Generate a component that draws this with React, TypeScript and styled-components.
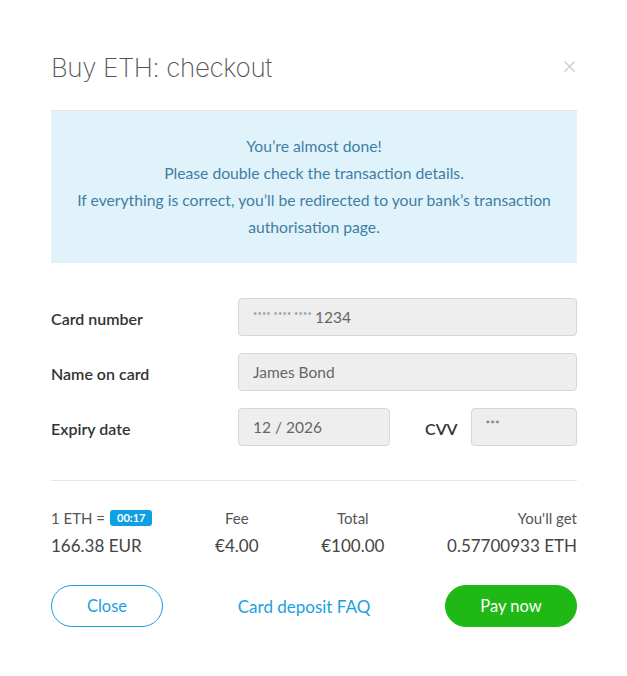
import React from "react";
import styled, { createGlobalStyle } from "styled-components";

const GlobalStyle = createGlobalStyle`
  html, body {
    margin: 0;
    padding: 0;
    background: #ffffff;
  }
  body {
    font-family: "Lato", "Open Sans", "Liberation Sans", sans-serif;
    color: #444;
    -webkit-font-smoothing: antialiased;
  }
  * { box-sizing: border-box; }
`;

const Modal = styled.div`
  width: 627px;
  min-height: 676px;
  padding: 0 50px 0 51px;
  background: #fff;
`;

const Header = styled.div`
  display: flex;
  justify-content: space-between;
  align-items: flex-start;
  padding: 50px 0 24px;
  border-bottom: 1px solid #e6e6e6;
`;

const Title = styled.h1`
  margin: 0;
  font-family: "Inter", "Lato", sans-serif;
  font-size: 26px;
  line-height: 36px;
  font-weight: 200;
  letter-spacing: -0.4px;
  color: #555;
`;

const CloseX = styled.button`
  border: 0;
  background: none;
  padding: 0;
  margin: 11px 2px 0 0;
  width: 11px;
  height: 11px;
  display: flex;
  cursor: pointer;
`;

const Notice = styled.div`
  background: #e1f3fa;
  padding: 22px 16px 22px;
  text-align: center;
  color: #3f7ea3;
  font-size: 15.7px;
  line-height: 27px;
`;

const NoticeLine = styled.p`
  margin: 0;
`;

const Form = styled.div`
  display: flex;
  flex-direction: column;
  gap: 17px;
  padding: 35px 0 34px;
  border-bottom: 1px solid #e6e6e6;
`;

const Row = styled.div`
  display: grid;
  grid-template-columns: 187px 1fr;
  align-items: center;
`;

const Label = styled.label<{ $inline?: boolean }>`
  font-size: 16px;
  font-weight: 600;
  color: #333;
  padding-top: 2px;
  margin: ${(p) => (p.$inline ? "0 13px 0 35px" : "0")};
`;

const Input = styled.div<{ $w?: number; $small?: boolean }>`
  height: 38px;
  ${(p) => (p.$w ? `width: ${p.$w}px; flex: none;` : "flex: 1;")}
  background: #eeeeee;
  border: 1px solid #d6d6d6;
  border-radius: 4px;
  padding: 0 14px;
  display: flex;
  align-items: ${(p) => (p.$small ? "flex-start" : "center")};
  padding-top: ${(p) => (p.$small ? "9px" : "0")};
  font-size: ${(p) => (p.$small ? "11px" : "15.5px")};
  color: #666;
`;

const Stars = styled.span`
  font-size: 10px;
  letter-spacing: 0.2px;
  margin-right: 3px;
  color: #777;
  position: relative;
  top: -2px;
`;

const InputGroup = styled.div`
  display: flex;
  align-items: center;
`;

const Summary = styled.div`
  display: flex;
  justify-content: space-between;
  padding-top: 27px;
`;

const Col = styled.div<{ $align: "left" | "center" | "right" }>`
  display: flex;
  flex-direction: column;
  align-items: ${(p) =>
    p.$align === "left" ? "flex-start" : p.$align === "right" ? "flex-end" : "center"};
  gap: 8px;
`;

const SumLabel = styled.div`
  display: flex;
  align-items: center;
  gap: 5px;
  font-size: 15px;
  line-height: 20px;
  color: #555;
`;

const SumValue = styled.div`
  font-size: 17px;
  line-height: 20px;
  color: #444;
`;

const Badge = styled.span`
  background: #0ea0e1;
  color: #fff;
  font-size: 11px;
  font-weight: 700;
  border-radius: 3px;
  padding: 1px 7px;
  line-height: 14px;
`;

const Actions = styled.div`
  display: flex;
  justify-content: space-between;
  align-items: center;
  padding-top: 29px;
`;

const Button = styled.button<{ $primary?: boolean }>`
  height: 42px;
  border-radius: 21px;
  font-family: inherit;
  font-size: 16.5px;
  cursor: pointer;
  ${(p) =>
    p.$primary
      ? `width: 132px; background: #1fb815; border: 1px solid #1fb815; color: #fff;`
      : `width: 112px; background: #fff; border: 1px solid #1a9fe0; color: #1a9fe0;`}
`;

const Link = styled.a`
  color: #1a9fe0;
  font-size: 17px;
  text-decoration: none;
  cursor: pointer;
`;

export default function App() {
  return (
    <>
      <GlobalStyle />
      <Modal>
        <Header>
          <Title>Buy ETH: checkout</Title>
          <CloseX aria-label="Close">
            <svg width="11" height="11" viewBox="0 0 11 11">
              <path d="M0.5 0.5L10.5 10.5M10.5 0.5L0.5 10.5" stroke="#c8c8c8" strokeWidth="1.1" />
            </svg>
          </CloseX>
        </Header>
        <Notice>
          <NoticeLine>You’re almost done!</NoticeLine>
          <NoticeLine>Please double check the transaction details.</NoticeLine>
          <NoticeLine>
            If everything is correct, you’ll be redirected to your bank’s transaction
            <br />
            authorisation page.
          </NoticeLine>
        </Notice>
        <Form>
          <Row>
            <Label>Card number</Label>
            <Input>
              <Stars>**** **** ****</Stars>1234
            </Input>
          </Row>
          <Row>
            <Label>Name on card</Label>
            <Input>James Bond</Input>
          </Row>
          <Row>
            <Label>Expiry date</Label>
            <InputGroup>
              <Input $w={152}>12 / 2026</Input>
              <Label $inline>CVV</Label>
              <Input $small>***</Input>
            </InputGroup>
          </Row>
        </Form>
        <Summary>
          <Col $align="left">
            <SumLabel>
              1 ETH = <Badge>00:17</Badge>
            </SumLabel>
            <SumValue>166.38 EUR</SumValue>
          </Col>
          <Col $align="center">
            <SumLabel>Fee</SumLabel>
            <SumValue>€4.00</SumValue>
          </Col>
          <Col $align="center">
            <SumLabel>Total</SumLabel>
            <SumValue>€100.00</SumValue>
          </Col>
          <Col $align="right">
            <SumLabel>You'll get</SumLabel>
            <SumValue>0.57700933 ETH</SumValue>
          </Col>
        </Summary>
        <Actions>
          <Button>Close</Button>
          <Link>Card deposit FAQ</Link>
          <Button $primary>Pay now</Button>
        </Actions>
      </Modal>
    </>
  );
}
